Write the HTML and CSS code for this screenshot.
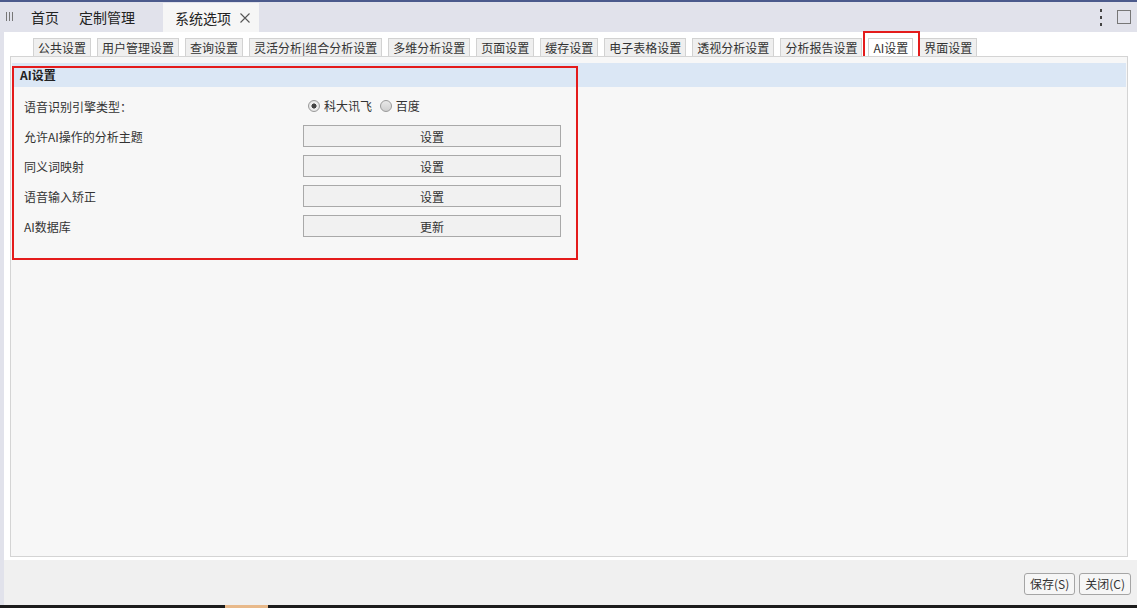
FILE: index.html
```html
<!DOCTYPE html>
<html lang="zh-CN">
<head>
    <meta charset="UTF-8">
    <title>系统选项</title>
    <link rel="stylesheet" href="styles.css">
</head>
<body>

<div class="topbar">
    <span class="grip">
        <svg width="8" height="9" viewBox="0 0 8 9"><path d="M0.5 0v9M3.5 0v9M6.5 0v9" stroke="#777" stroke-width="1"/></svg>
    </span>
    <span class="top-tab">首页</span>
    <span class="top-tab">定制管理</span>
    <span class="top-tab active">系统选项
        <svg class="close" width="10" height="10" viewBox="0 0 10 10"><path d="M0.5 0.5l9 9M9.5 0.5l-9 9" stroke="#555" stroke-width="1.1"/></svg>
    </span>
    <div class="top-tools">
        <span class="dots"><i></i><i></i><i></i></span>
        <span class="max-box"></span>
    </div>
</div>

<div class="main">
    <div class="subtabs">
        <span class="subtab">公共设置</span>
        <span class="subtab">用户管理设置</span>
        <span class="subtab">查询设置</span>
        <span class="subtab">灵活分析|组合分析设置</span>
        <span class="subtab">多维分析设置</span>
        <span class="subtab">页面设置</span>
        <span class="subtab">缓存设置</span>
        <span class="subtab">电子表格设置</span>
        <span class="subtab">透视分析设置</span>
        <span class="subtab">分析报告设置</span>
        <span class="subtab active">AI设置</span>
        <span class="subtab">界面设置</span>
    </div>
    <div class="panel">
        <div class="panel-head">AI设置</div>
        <div class="rows">
            <div class="row">
                <span class="label">语音识别引擎类型：</span>
                <div class="radios">
                    <label><input type="radio" name="engine" checked> 科大讯飞</label>
                    <label><input type="radio" name="engine"> 百度</label>
                </div>
            </div>
            <div class="row">
                <span class="label">允许AI操作的分析主题</span>
                <button class="set-btn">设置</button>
            </div>
            <div class="row">
                <span class="label">同义词映射</span>
                <button class="set-btn">设置</button>
            </div>
            <div class="row">
                <span class="label">语音输入矫正</span>
                <button class="set-btn">设置</button>
            </div>
            <div class="row">
                <span class="label">AI数据库</span>
                <button class="set-btn">更新</button>
            </div>
        </div>
        <div class="mark"></div>
    </div>
</div>

<div class="footer">
    <button class="foot-btn">保存(S)</button>
    <button class="foot-btn">关闭(C)</button>
</div>
<div class="bottom-line"><span class="task"></span></div>

</body>
</html>
```

FILE: styles.css
```css
body {
    margin: 0;
    padding: 0;
    font-family: "Noto Sans CJK SC", "Liberation Sans", sans-serif;
    font-size: 12px;
    color: #333;
    background: #fff;
    width: 1137px;
    height: 608px;
    overflow: hidden;
}

.topbar {
    display: flex;
    align-items: stretch;
    height: 30px;
    border-top: 2px solid #4b5a8c;
    background: #e1e2eb;
}

.grip {
    width: 26px;
    padding-left: 6px;
    box-sizing: border-box;
    display: flex;
    align-items: center;
    padding-bottom: 2px;
}

.top-tab {
    display: flex;
    align-items: center;
    padding: 0 5px;
    margin-right: 10px;
    font-size: 14px;
    color: #222;
}

.top-tab.active {
    margin-left: 13px;
    padding: 0 9px 0 12px;
    background: #f6f6f6;
    margin-top: 1px;
}

.close {
    margin-left: 9px;
}

.top-tools {
    margin-left: auto;
    display: flex;
    align-items: center;
    padding-right: 6px;
}

.dots {
    display: flex;
    flex-direction: column;
    gap: 4px;
    margin-right: 15px;
}

.dots i {
    display: block;
    width: 2px;
    height: 3px;
    background: #444;
}

.max-box {
    width: 12px;
    height: 12px;
    border: 1px solid #777;
}

.main {
    height: 528px;
    box-sizing: border-box;
    border-left: 4px solid #e1e2eb;
    padding: 6px 9px 3px 6px;
    display: flex;
    flex-direction: column;
}

.subtabs {
    display: flex;
    gap: 6px;
    padding-left: 23px;
    height: 18px;
}

.subtab {
    border: 1px solid #d2d2d2;
    border-bottom: none;
    background: #efefef;
    padding: 0 4px;
    line-height: 17px;
    color: #333;
}

.subtab.active {
    position: relative;
    background: #fff;
}

.subtab.active::after {
    content: "";
    position: absolute;
    left: -6px;
    top: -8px;
    width: 53px;
    height: 31px;
    border: 2px solid #e41b1b;
}

.panel {
    position: relative;
    flex: 1;
    border: 1px solid #d4d4d4;
    background: #f7f7f7;
    padding: 6px 1px 0 1px;
}

.panel-head {
    height: 24px;
    line-height: 24px;
    background: #dbe7f5;
    padding-left: 8px;
    font-weight: bold;
    color: #222;
}

.rows {
    padding: 4px 0 0 12px;
}

.row {
    display: flex;
    align-items: center;
    height: 30px;
}

.label {
    width: 279px;
}

.radios label {
    display: inline-flex;
    align-items: center;
    margin-right: 3px;
}

.radios input {
    appearance: none;
    width: 12px;
    height: 12px;
    margin: 0 4px 0 5px;
    border: 1px solid #9a9a9a;
    border-radius: 50%;
    background: linear-gradient(#e8e8e8, #cfcfcf);
    box-sizing: border-box;
}

.radios input:checked {
    background: radial-gradient(circle, #444 0, #444 2.3px, #f2f2f2 2.8px, #d8d8d8 100%);
}

.radios label + label input {
    margin-left: 2px;
}

.set-btn {
    width: 258px;
    height: 22px;
    border: 1px solid #a9a9a9;
    background: #f1f1f1;
    font-family: inherit;
    font-size: 12px;
    color: #333;
    padding: 0;
}

.mark {
    position: absolute;
    left: 1px;
    top: 9px;
    width: 562px;
    height: 190px;
    border: 2px solid #e41b1b;
}

.footer {
    height: 45px;
    box-sizing: border-box;
    border-left: 4px solid #e1e2eb;
    background: #f0f0f0;
    display: flex;
    justify-content: flex-end;
    align-items: center;
    gap: 4px;
    padding: 2px 6px 0 0;
}

.foot-btn {
    height: 22px;
    padding: 0 5px;
    border: 1px solid #a5a5a5;
    border-radius: 3px;
    background: #f6f6f6;
    font-family: inherit;
    font-size: 12px;
    color: #333;
}

.bottom-line {
    height: 3px;
    background: #1c1c1c;
    position: relative;
}

.task {
    position: absolute;
    left: 225px;
    top: 0;
    width: 43px;
    height: 3px;
    background: #e8b98a;
}
```
